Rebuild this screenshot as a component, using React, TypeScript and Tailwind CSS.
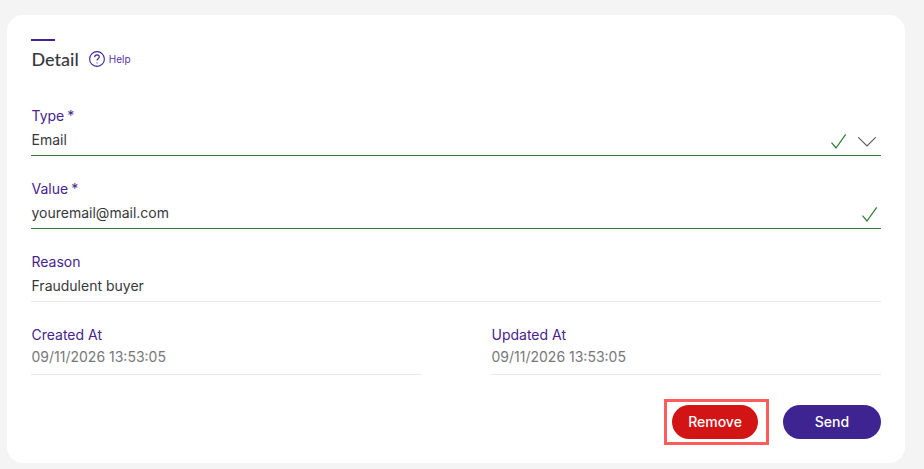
const labelCls = "pl-[0.5px] text-sm leading-5 text-[#47238f]";

function Field({
  label,
  required,
  value,
  line,
  muted,
  children,
}: {
  label: string;
  required?: boolean;
  value: string;
  line: string;
  muted?: boolean;
  children?: React.ReactNode;
}) {
  return (
    <div className="h-[73px] pt-[7px]">
      <div className={labelCls}>
        {label}
        {required && <span className="ml-[3px]">*</span>}
      </div>
      <div className={`flex h-[30px] items-center justify-between border-b ${muted ? "pb-[5px]" : "pb-[1px]"} ${line}`}>
        <span className={`pl-[0.5px] text-sm leading-5 ${muted ? "text-[#77777a]" : "text-[#37373c]"}`}>{value}</span>
        {children}
      </div>
    </div>
  );
}

function Tick() {
  return (
    <svg width="16" height="16" viewBox="0 0 16 16" fill="none" stroke="#2e7d32" strokeWidth="1.2" className="mt-[2px]">
      <path d="M0.5 9.7L5 15L14.7 1.3" />
    </svg>
  );
}

export default function App() {
  return (
    <div className="h-[469px] w-[924px] bg-[#f4f4f4] pl-[7px] pr-[19px] pt-[15px] font-['Inter',sans-serif]">
      <div className="h-[448px] rounded-2xl bg-white px-6 pt-6">
        {/* Title */}
        <div className="h-[2px] w-6 bg-[#3d2490]" />
        <div className="mt-[8px] flex h-5 items-center">
          <h2 className="pl-[0.5px] font-['Lato',sans-serif] text-[18px] font-medium leading-5 text-[#37373c]">Detail</h2>
          <svg width="16" height="16" viewBox="0 0 16 16" className="ml-[10px]" fill="none" stroke="#3d2490">
            <circle cx="8" cy="8" r="7.4" strokeWidth="1.1" />
            <path d="M5.7 6.2c0-1.4 1-2.3 2.3-2.3s2.3 .9 2.3 2.1c0 1.7-2.3 1.8-2.3 3.5" strokeWidth="1.1" />
            <circle cx="8" cy="11.8" r="0.6" fill="#3d2490" stroke="none" />
          </svg>
          <span className="ml-[4px] text-[10px] leading-5 text-[#5b2fa8]">Help</span>
        </div>

        <div className="mt-[30px]">
          <Field label="Type" required value="Email" line="border-[#2e7d32]">
            <span className="flex items-center gap-[11px] pr-[5px]">
              <Tick />
              <svg width="18" height="10" viewBox="0 0 18 10" fill="none" stroke="#5a5a60" strokeWidth="1.1" className="mt-[3px]">
                <path d="M0.3 0.3L9 9L17.7 0.3" />
              </svg>
            </span>
          </Field>
          <Field label="Value" required value="youremail@mail.com" line="border-[#2e7d32]">
            <span className="flex items-center pr-[3px]">
              <Tick />
            </span>
          </Field>
          <Field label="Reason" value="Fraudulent buyer" line="border-[#e8e8e8]" />
          <div className="grid grid-cols-2 gap-x-[70px]">
            <Field label="Created At" value="09/11/2026 13:53:05" line="border-[#e8e8e8]" muted />
            <Field label="Updated At" value="09/11/2026 13:53:05" line="border-[#e8e8e8]" muted />
          </div>
        </div>

        {/* Actions */}
        <div className="mt-[8px] flex items-center justify-end">
          <div className="border-[3px] border-[#ff5c5c] py-[3px] pl-[5px] pr-[8px]">
            <button className="h-[34px] w-[86px] rounded-full bg-[#d31414] text-sm font-medium text-white">Remove</button>
          </div>
          <button className="ml-[14px] h-[34px] w-[98px] rounded-full bg-[#3d2490] text-sm font-medium text-white">Send</button>
        </div>
      </div>
    </div>
  );
}
